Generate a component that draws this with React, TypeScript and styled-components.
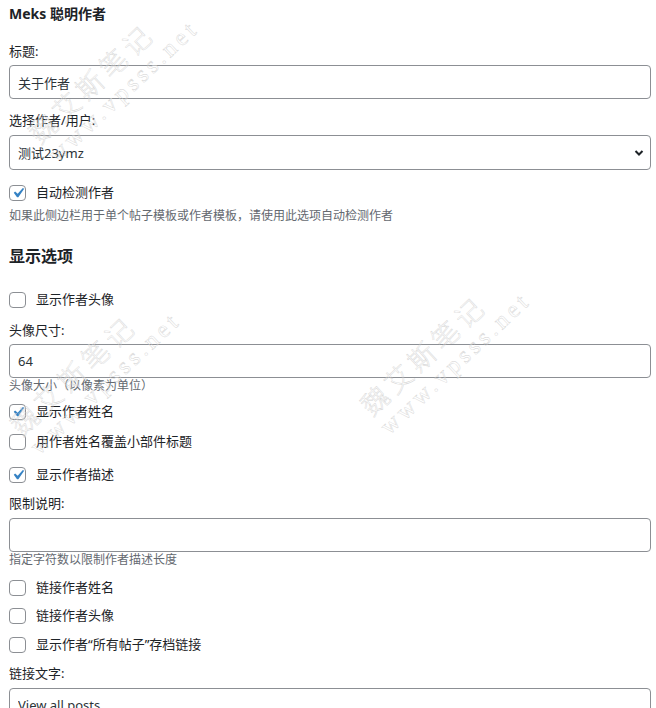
import React from "react";
import styled, { createGlobalStyle } from "styled-components";

const GlobalStyle = createGlobalStyle`
  html, body {
    margin: 0;
    overflow: hidden;
    background: #fff;
  }
  body {
    font-family: "Segoe UI", "Noto Sans", "Noto Sans CJK SC", sans-serif;
    color: #1d2327;
  }
`;

const Form = styled.div`
  position: relative;
  display: flex;
  flex-direction: column;
  padding: 5px 5px 0 9px;
  font-size: 13px;
  line-height: 18px;
`;

const Title = styled.h3`
  margin: 0;
  font-size: 14px;
  line-height: 18px;
  font-weight: 700;
`;

const Section = styled.h4<{ $mt: number }>`
  margin: ${(p) => p.$mt}px 0 0;
  font-size: 16px;
  line-height: 22px;
  font-weight: 700;
`;

const Field = styled.div<{ $mt: number }>`
  display: flex;
  flex-direction: column;
  margin-top: ${(p) => p.$mt}px;
`;

const Label = styled.label<{ $mb?: number }>`
  display: block;
  margin-bottom: ${(p) => p.$mb ?? 5}px;
  line-height: 18px;
`;

const TextInput = styled.input`
  box-sizing: border-box;
  width: 100%;
  height: 34px;
  margin: 0;
  padding: 0 8px;
  border: 1px solid #8c8f94;
  border-radius: 4px;
  background: #fff;
  color: #2c3338;
  font: inherit;
  font-size: 13px;
  outline: none;
`;

const SelectWrap = styled.div`
  position: relative;
`;

const Select = styled.select`
  box-sizing: border-box;
  width: 100%;
  height: 35px;
  margin: 0;
  padding: 0 24px 0 8px;
  border: 1px solid #8c8f94;
  border-radius: 4px;
  background: #fff;
  color: #2c3338;
  font: inherit;
  font-size: 13px;
  appearance: none;
  outline: none;
`;

const Chevron = styled.svg`
  position: absolute;
  right: 7px;
  top: 50%;
  width: 10px;
  height: 8px;
  margin-top: -4px;
  pointer-events: none;
`;

const CheckRow = styled.label<{ $mt: number }>`
  display: flex;
  align-items: center;
  gap: 10px;
  height: 18px;
  margin-top: ${(p) => p.$mt}px;
`;

const Box = styled.span`
  position: relative;
  flex: none;
  box-sizing: border-box;
  width: 17px;
  height: 16px;
  margin-top: 1px;
  border: 1px solid #8c8f94;
  border-radius: 4px;
  background: #fff;

  svg {
    position: absolute;
    left: -2px;
    top: -3px;
    width: 20px;
    height: 20px;
  }
`;

const Help = styled.p<{ $mt: number }>`
  margin: ${(p) => p.$mt}px 0 0;
  font-size: 12px;
  line-height: 16px;
  color: #646970;
`;

const Watermark = styled.div<{ $x: number; $y: number }>`
  position: absolute;
  left: ${(p) => p.$x}px;
  top: ${(p) => p.$y}px;
  transform: translate(-50%, -50%) rotate(-43deg);
  pointer-events: none;
  white-space: nowrap;
  color: transparent;
  -webkit-text-stroke: 0.4px #d2d2d2;

  div:first-child {
    font-family: "Noto Sans CJK SC", sans-serif;
    font-weight: 200;
    font-size: 27px;
    line-height: 30px;
    letter-spacing: 5px;
  }
  div:last-child {
    font-family: "Liberation Serif", serif;
    font-size: 24px;
    line-height: 26px;
    letter-spacing: 4px;
  }
`;

const Check = ({ label, checked, mt }: { label: string; checked?: boolean; mt: number }) => (
  <CheckRow $mt={mt}>
    <Box>
      {checked && (
        <svg viewBox="0 0 20 20">
          <path d="M14.83 4.89l1.34.94-5.81 8.38H9.02L5.78 9.67l1.34-1.25 2.57 2.4z" fill="#3582c4" />
        </svg>
      )}
    </Box>
    <span>{label}</span>
  </CheckRow>
);

const marks = [
  { x: 113, y: 80 },
  { x: 95, y: 372 },
  { x: 445, y: 352 },
];

export default function App() {
  return (
    <Form>
      <GlobalStyle />
      <Title>Meks 聪明作者</Title>

      <Field $mt={19}>
        <Label>标题:</Label>
        <TextInput defaultValue="关于作者" />
      </Field>

      <Field $mt={12}>
        <Label $mb={6}>选择作者/用户:</Label>
        <SelectWrap>
          <Select defaultValue="1">
            <option value="1">测试23ymz</option>
          </Select>
          <Chevron viewBox="0 0 10 8">
            <path d="M1.5 2l3.5 3.5L8.5 2" fill="none" stroke="#1d2327" strokeWidth="2" />
          </Chevron>
        </SelectWrap>
      </Field>

      <Check mt={13} checked label="自动检测作者" />
      <Help $mt={7}>如果此侧边栏用于单个帖子模板或作者模板，请使用此选项自动检测作者</Help>

      <Section $mt={21}>显示选项</Section>

      <Check mt={23} label="显示作者头像" />

      <Field $mt={13}>
        <Label>头像尺寸:</Label>
        <TextInput defaultValue="64" />
      </Field>
      <Help $mt={0}>头像大小（以像素为单位）</Help>

      <Check mt={8} checked label="显示作者姓名" />
      <Check mt={12} label="用作者姓名覆盖小部件标题" />
      <Check mt={15} checked label="显示作者描述" />

      <Field $mt={11}>
        <Label $mb={6}>限制说明:</Label>
        <TextInput defaultValue="" />
      </Field>
      <Help $mt={0}>指定字符数以限制作者描述长度</Help>

      <Check mt={10} label="链接作者姓名" />
      <Check mt={10} label="链接作者头像" />
      <Check mt={11} label="显示作者“所有帖子”存档链接" />

      <Field $mt={11}>
        <Label $mb={6}>链接文字:</Label>
        <TextInput defaultValue="View all posts" />
      </Field>

      {marks.map((m, i) => (
        <Watermark key={i} $x={m.x} $y={m.y}>
          <div>魏艾斯笔记</div>
          <div>www.vpsss.net</div>
        </Watermark>
      ))}
    </Form>
  );
}
